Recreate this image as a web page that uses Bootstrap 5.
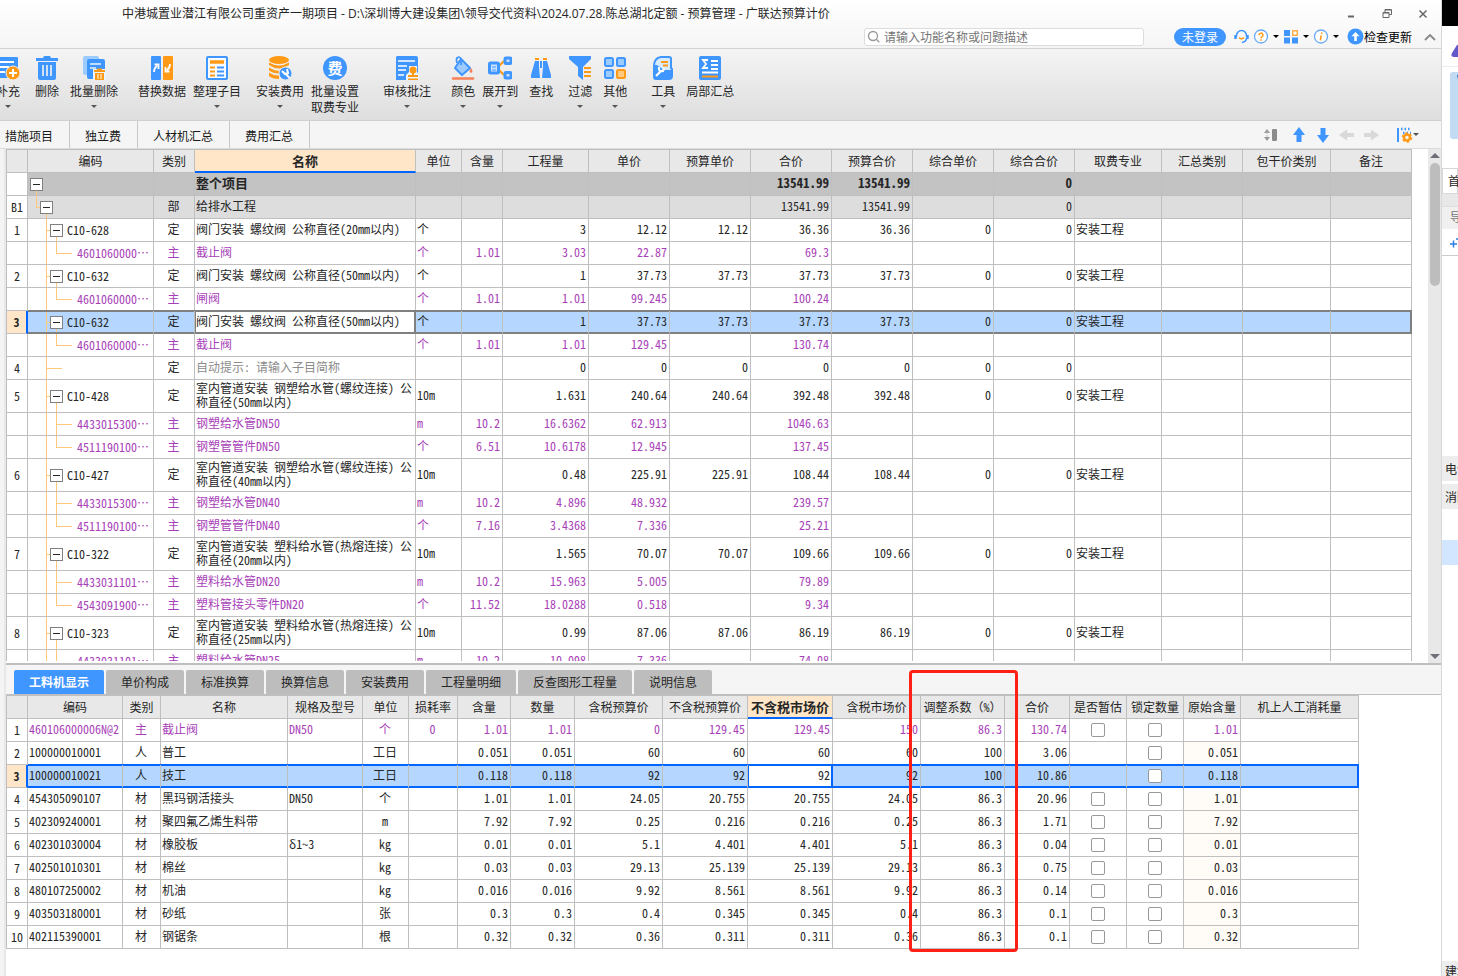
<!DOCTYPE html>
<html lang="zh-CN">
<head>
<meta charset="utf-8">
<meta name="viewport" content="width=device-width, initial-scale=1">
<title>广联达预算计价</title>
<link href="https://cdn.jsdelivr.net/npm/bootstrap@5.3.0/dist/css/bootstrap.min.css" rel="stylesheet">
<style>
:root{--line:#bfbfbf;--ink:#262626;--blue:#4096ff;--sel:#b4d6ff;--orange:#ff9a17;--tree:#ffc97a}
body{font:12px/16px "Noto Sans CJK SC",sans-serif;color:var(--ink);background:#fff}
button{font:inherit;color:inherit;background:none;border:0;padding:0}
svg{display:block;flex:none}
.app-main{min-width:0}
.title-bar{background:linear-gradient(#fff,#f5f5f5);border-bottom:1px solid #d2d2d2}
.title-row{height:27px;padding-left:122px}
.title-text{font-family:"Open Sans","Noto Sans CJK SC",sans-serif}
.win-btns{gap:24px;padding-right:12px}
.tool-row{height:21px;padding-right:4px;padding-bottom:2px}
.search-box{width:280px;height:18px;border:1px solid #dcdcdc;border-radius:3px;background:#fff;padding:0 2px;gap:4px;margin-right:30px}
.search-box input{border:0;outline:0;padding:0;font:inherit;width:240px;height:16px}
.search-box input::placeholder{color:#757575}
.login-btn{width:52px;height:18px;line-height:17px;border-radius:9px;background:var(--blue);color:#fff}
.caret{width:0;height:0;border:3px solid transparent;border-top-color:#555;border-bottom:0}
.tool-row .caret{border-top-color:#000}
.ribbon{height:73px;background:linear-gradient(#f4f4f4,#dedede);border-bottom:1px solid #cfcfcf;padding-top:7px;overflow:hidden}
.ribbon button{display:flex;flex-direction:column;align-items:center;white-space:nowrap;line-height:16px}
.ribbon svg{width:24px;height:24px;margin-bottom:3px}
.ribbon .caret{margin-top:6px}
.r-cut{margin-left:-4px}.r-s{margin-left:7px}.r-m{margin-left:11px}.r-l{margin-left:15px}.r-xl{margin-left:20px}.r-xxl{margin-left:24px}
.page-tabs{height:28px;background:#f5f5f5;border-bottom:1px solid #dcdcdc;padding-right:22px}
.page-tabs a{color:#1a1a1a;text-decoration:none;padding:1px 16px 0 15px;border-right:1px solid #c8c8c8;height:27px;line-height:27px}
.page-tabs a:first-child{padding-left:5px}
.left-edge{width:6px;background:#f4f4f4;border-right:2px solid #e8e8e8}
.grid-wrap{overflow:hidden;margin-bottom:2px}
.grid{border-collapse:separate;border-spacing:0;table-layout:fixed;width:1px;border-top:1px solid var(--line);border-left:1px solid var(--line);font-family:"Noto Sans Mono CJK SC","Noto Sans CJK SC",monospace;line-height:14px}
.grid th,.grid td{border:0 solid var(--line);border-width:0 1px 1px 0;padding:0 2px 2px 1px;height:23px;white-space:nowrap;overflow:hidden;vertical-align:middle}
.grid th{font-weight:400;text-align:center;background:#e8e8e8;padding:0}
.grid th.hot{font-weight:700;font-size:13px;background:#ffe6c8;border-bottom:2px solid #0066ff}
.grid td.c,.grid td.no{text-align:center}
.grid td.no{padding:0}
.grid td.r{text-align:right}
.grid td.wrap{white-space:normal;padding-right:0}
.grid tr.tall td{height:33px}
.grid tr.mat td:not(.no){color:#a83fb8}
.grid tr.root td:not(.no){background-color:#c3c3c3;font-weight:700;font-size:13px}
.grid tr.part td:not(.no){background-color:#ddd}
.grid tr.sel td{background-color:var(--sel);border-bottom-color:var(--edge);box-shadow:inset 0 1px var(--edge),inset 0 -1px var(--edge),0 -1px var(--edge)}
.grid tr.sel td.no{background-color:#ffe6c8;font-weight:700;box-shadow:none;border-bottom-color:var(--line);border-right:2px solid #0066ff}
.grid tr.sel td:last-child{border-right:2px solid var(--edge)}
.grid tr.sel td.cur{background-color:#fff;border-left:1px solid var(--edge);border-right:2px solid var(--edge);padding-left:0}
.grid tr.sel td.cur.r{padding-right:1px}
.grid-a{--edge:#808080}
.grid-b{--edge:#0066ff}
.grid td.hint{color:#8c8c8c}
.grid td.cream{background:#fffcf7}
.grid td.tree{background-repeat:no-repeat;padding:0}
.tree>span{display:flex;align-items:center;gap:4px}
.fold{width:13px;height:13px;border:1px solid #808080;background:#fff;flex:none;display:flex;align-items:center;justify-content:center}
.fold::before{content:"";width:7px;height:1px;background:#262626}
.l0>span{padding-left:2px}.l1>span{padding-left:12px}.l2>span{padding-left:22px}.l3>span{padding-left:49px}
.grid .l0{background-image:linear-gradient(var(--tree),var(--tree));background-size:1px 50%;background-position:8px 100%}
.grid .l1{background-image:linear-gradient(var(--tree),var(--tree)),linear-gradient(var(--tree),var(--tree)),linear-gradient(var(--tree),var(--tree));background-size:1px 50%,4px 1px,1px 50%;background-position:8px 0,8px 50%,18px 100%}
.grid .l2{background-image:linear-gradient(var(--tree),var(--tree)),linear-gradient(var(--tree),var(--tree)),linear-gradient(var(--tree),var(--tree));background-size:1px 100%,4px 1px,1px 50%;background-position:18px 0,18px 50%,28px 100%}
.grid .l2.leaf{background-size:1px 100%,16px 1px,0 0}
.grid .l3{background-image:linear-gradient(var(--tree),var(--tree)),linear-gradient(var(--tree),var(--tree)),linear-gradient(var(--tree),var(--tree));background-size:1px 100%,16px 1px,1px 50%;background-position:18px 0,28px 50%,28px 0}
.grid .l3.more{background-size:1px 100%,16px 1px,1px 100%}
.scroll-rail{width:13px;background:#e8e8e8;padding:4px 2px}
.scroll-thumb{height:123px;border-radius:5px;background:#bdbdbd;margin:5px -1px 0 0}
.tri-up,.tri-down{width:0;height:0;border:5px solid transparent;border-top-width:0;border-bottom-color:#6e6e78}
.tri-down{border-top:5px solid #6e6e78;border-bottom:0}
.detail{border-top:2px solid var(--line);padding-bottom:27px}
.detail-tabs{background:#f5f5f5;padding:5px 8px 0;gap:2px;border-bottom:1px solid var(--line)}
.detail-tabs button{height:24px;padding:0 15px;background:#bdbdbd;border-radius:2px 2px 0 0;line-height:24px}
.detail-tabs .on{background:var(--blue);color:#fff;font-weight:700}
.tick-box{appearance:none;width:14px;height:14px;border:1px solid #999;border-radius:2px;background:#fff;display:block;margin:1px auto 0}
.red-frame{position:absolute;left:903px;top:5px;width:109px;height:282px;border:3px solid #ff1f14;border-radius:4px;pointer-events:none}
.side-app{width:17px;border-left:1px solid #d8d8d8;overflow:hidden;white-space:nowrap;flex:none}
.side-black{height:26px;background:#000}
.side-logo{height:41px;padding:18px 0 0 9px;border-bottom:1px solid #eee}
.side-tile{height:67px;margin:5px 0 29px 8px;background:#c3daf3;border-radius:3px 0 0 3px;padding:3px 0 0 7px}
.side-tab{height:26px;border:1px solid #d8d8d8;padding:4px 0 0 5px;background:#fff}
.side-bar{height:12px;background:#e8e8e8}
.side-sub{height:23px;background:#f0f0f0;color:#777;padding:2px 0 0 8px;border-top:1px solid #ddd}
.side-add{height:27px;border-bottom:1px solid #ccc;padding:8px 0 0 7px;margin-bottom:200px}
.side-cell{height:25px;background:#ededed;padding:5px 0 0 3px;margin-bottom:3px}
.side-pick{height:25px;background:#d3e6ff;margin-top:28px}
.side-foot{height:15px;background:#ededed;padding:2px 0 0 3px;overflow:hidden}
</style>
</head>
<body>
<div class="d-flex vh-100 overflow-hidden">
<div class="app-main d-flex flex-column flex-grow-1">

<header class="title-bar">
  <div class="title-row d-flex align-items-center">
    <span class="title-text flex-grow-1 text-nowrap">中港城置业潜江有限公司重资产一期项目 - D:\深圳博大建设集团\领导交代资料\2024.07.28.陈总湖北定额 - 预算管理 - 广联达预算计价</span>
    <div class="win-btns d-flex align-items-center">
      <button aria-label="最小化"><svg width="12" height="12"><path d="M3 8.500h6" stroke="#666" stroke-width="2"/></svg></button>
      <button aria-label="还原"><svg width="12" height="12" fill="none" stroke="#666"><path d="M4 4V1.500h6.500v5H8M2 4.500h6v5H2zM2 5h6M4 2h6"/></svg></button>
      <button aria-label="关闭"><svg width="12" height="12"><path d="M2.500 2.500l7 7m0-7l-7 7" stroke="#666" stroke-width="1.500"/></svg></button>
    </div>
  </div>
  <div class="tool-row d-flex align-items-center justify-content-end">
    <label class="search-box d-flex align-items-center"><svg width="13" height="13" fill="none" stroke="#999" stroke-width="1.300"><circle cx="6" cy="6" r="4.500"/><path d="M9.300 9.300l3 3"/></svg><input type="text" aria-label="搜索" placeholder="请输入功能名称或问题描述"></label>
    <button class="login-btn">未登录</button>
    <button class="ms-2" aria-label="客服"><svg width="15" height="15" fill="none" stroke="#4096ff" stroke-width="1.500"><path d="M2.500 8V6.500a5 5 0 0 1 10 0V8M12.500 9c0 3-2 4-4.500 4.500"/><path d="M1.500 6v4M13.500 6v4" stroke-width="2.500"/><path d="M5 8.500q2.500 2.500 5 0" stroke="#ff9a17"/></svg></button>
    <button class="d-flex align-items-center ms-1 gap-1" aria-label="帮助"><svg width="16" height="15"><circle cx="8" cy="7.500" r="6.500" fill="#fff" stroke="#69a9f5" stroke-width="1.300"/><path d="M6 6.200a2 2 0 1 1 3 1.600q-1 .5-1 1.400M8 10.200v1.500" fill="none" stroke="#ff9a17" stroke-width="1.500"/></svg><i class="caret"></i></button>
    <button class="d-flex align-items-center ms-1 gap-1" aria-label="应用"><svg width="16" height="15"><path d="M1 1h6v6H1zM1 8.500h6v6H1zM9 8.500h6v6H9z" fill="#4096ff"/><path d="M9.700 1.700h4.600v4.600H9.700z" fill="#fff" stroke="#ffae45" stroke-width="1.400"/></svg><i class="caret"></i></button>
    <button class="d-flex align-items-center ms-1 gap-1" aria-label="信息"><svg width="16" height="15"><circle cx="8" cy="7.500" r="6.500" fill="#fff" stroke="#69a9f5" stroke-width="1.300"/><path d="M8.800 3.500l-.3 1.500M8.200 6.300l-.8 5" stroke="#ff9a17" stroke-width="1.600"/></svg><i class="caret"></i></button>
    <button class="d-flex align-items-center ms-2 text-black"><svg width="17" height="17"><circle cx="8.500" cy="8.500" r="8" fill="#4096ff"/><path d="M8.500 4l4 4.200h-2.700V13H7.200V8.200H4.500z" fill="#fff"/></svg>检查更新</button>
    <button class="r-m" aria-label="收起"><svg width="14" height="12"><path d="M2 9l5-5 5 5" fill="none" stroke="#888" stroke-width="1.800"/></svg></button>
  </div>
</header>

<nav class="ribbon d-flex align-items-start" aria-label="工具栏">
  <button class="r-cut"><svg viewBox="0 0 24 24"><path d="M1 1h20a1 1 0 0 1 1 1v20H1z" fill="#4096ff"/><path d="M2 6h16M2 11h11M2 16h7" stroke="#fff" stroke-width="2"/><circle cx="17" cy="17" r="7" fill="#ff9a17" stroke="#eee"/><path d="M17 13v8M13 17h8" stroke="#fff" stroke-width="2"/></svg>补充<i class="caret"></i></button>
  <button class="r-l"><svg viewBox="0 0 24 24" fill="#4096ff"><path d="M1 2h7l1-2h6l1 2h7v3H1zM3 6h18v16a2 2 0 0 1-2 2H5a2 2 0 0 1-2-2z"/><path d="M8 9v11M12 9v11M16 9v11" stroke="#f4f4f4" stroke-width="1.600"/></svg>删除</button>
  <button class="r-m"><svg viewBox="0 0 24 24"><rect x="1" y="0" width="16" height="19" rx="2" fill="#9ccbff"/><path d="M5 5a2 2 0 0 1 2-2h14a2 2 0 0 1 2 2v18H7a2 2 0 0 1-2-2z" fill="#4096ff"/><path d="M8 8h11M8 12h6" stroke="#e9f4ff" stroke-width="1.500"/><path d="M11 13h13v11H11z" fill="#e9f4ff"/><path d="M12 14h3v-1.500h5V14h3v2H12zM13 17h9v7h-9z" fill="#ff9a17"/><path d="M16 18v5M19 18v5" stroke="#fff"/></svg>批量删除<i class="caret"></i></button>
  <button class="r-xl"><svg viewBox="0 0 24 24"><rect x="1" y="0" width="10" height="24" rx="1" fill="#4096ff"/><rect x="13" y="0" width="10" height="24" rx="1" fill="#ff9a17"/><path d="M4 16q0-4 3-6M4.500 8.500h4V13" fill="none" stroke="#fff" stroke-width="1.800"/><path d="M20 8q0 4-3 6M15.500 11v4.500h4" fill="none" stroke="#fff" stroke-width="1.800"/></svg>替换数据</button>
  <button class="r-s"><svg viewBox="0 0 24 24"><rect x="2" y="1" width="20" height="22" rx="1" fill="#f8fbff" stroke="#4096ff" stroke-width="2"/><path d="M5 6h14" stroke="#ff9a17" stroke-width="3.500"/><path d="M5 11.500h5M5 15.500h5M5 19.500h5" stroke="#ff9a17" stroke-width="2"/><path d="M12 11.500h7M12 15.500h7M12 19.500h7" stroke="#4096ff" stroke-width="2"/></svg>整理子目<i class="caret"></i></button>
  <button class="r-l"><svg viewBox="0 0 24 24"><g fill="#ff9a17"><ellipse cx="11" cy="4" rx="10" ry="4"/><path d="M1 6.500q10 6 20 0V9q-10 7-20 0zM1 11.500q10 6 17 2l-7 4q-6 0-10-3zM1 16.500q5 3.500 10 3v3.500q-7 0-10-3z"/></g><circle cx="17.500" cy="17.500" r="6.500" fill="#4096ff" stroke="#eaeaea"/><path d="M14 15l3 3 3-1-1-4M18 18l3.500 4" fill="none" stroke="#fff" stroke-width="2"/></svg>安装费用<i class="caret"></i></button>
  <button class="r-s"><svg viewBox="0 0 24 24"><circle cx="12" cy="12" r="12" fill="#4096ff"/><text x="12" y="17.500" text-anchor="middle" font-size="15" font-weight="700" fill="#fff">费</text></svg>批量设置<span>取费专业</span></button>
  <button class="r-xxl"><svg viewBox="0 0 24 24"><path d="M2 0h19a2 2 0 0 1 2 2v22H1V1z" fill="#4096ff"/><path d="M3 5h17M3 10h9M3 14h8M3 19h6" stroke="#fff" stroke-width="1.600"/><path d="M11 24v-5l3-3v-6h8v6l2 3v5z" fill="#edf4fc"/><circle cx="18" cy="14" r="3.500" fill="#ff9a17"/><path d="M17 16h2v3h4v2H13v-2h4zM13 22.500h10V24H13z" fill="#ff9a17"/></svg>审核批注<i class="caret"></i></button>
  <button class="r-xl"><svg viewBox="0 0 24 24"><path d="M10 3l9 9-8 7-7-7z" fill="#9ccbff" stroke="#4096ff" stroke-width="2" stroke-linejoin="round"/><path d="M10 9V3q-1-3-4-1-1 1 0 5" fill="none" stroke="#4096ff" stroke-width="1.800"/><path d="M20 12q3 4 0 5-3-1 0-5z" fill="#f98159"/><path d="M2 22.500h20" stroke="#f98159" stroke-width="2.500" stroke-linecap="round"/></svg>颜色<i class="caret"></i></button>
  <button class="r-s"><svg viewBox="0 0 24 24"><path d="M11 10l5-5M11 14l5 5" stroke="#ff9a17" stroke-width="2"/><g fill="#c9e2ff" stroke="#4096ff" stroke-width="3"><rect x="1.500" y="7" width="9" height="10" rx="1"/><rect x="17" y="2" width="6" height="5.500" rx="1"/><rect x="17" y="16.500" width="6" height="5.500" rx="1"/></g><path d="M4 11h4M4 14h4" stroke="#4096ff"/></svg>展开到<i class="caret"></i></button>
  <button class="r-m"><svg viewBox="0 0 24 24"><path d="M6 2h4v2H6zM14 2h4v2h-4z" fill="#ff9a17"/><path d="M6 5h4v6l1 11H2v-3zM14 5h4l4 14v3h-9l1-11zM11 5h2v7h-2z" fill="#4096ff"/></svg>查找</button>
  <button class="r-l"><svg viewBox="0 0 24 24"><path d="M1 0h22v3l-8 8v13l-5-4v-9L1 3z" fill="#4096ff"/><path d="M16 12h7M16 16h7M16 20h7" stroke="#ff9a17" stroke-width="2"/></svg>过滤<i class="caret"></i></button>
  <button class="r-m"><svg viewBox="0 0 24 24" fill="#9ccbff" stroke="#4096ff" stroke-width="2"><rect x="2" y="2" width="8" height="8" rx="1.500"/><rect x="14" y="2" width="8" height="8" rx="1.500"/><rect x="2" y="14" width="8" height="8" rx="1.500"/><rect x="14" y="14" width="8" height="8" rx="1.500" fill="#ffc980" stroke="#ff9a17"/></svg>其他<i class="caret"></i></button>
  <button class="r-xxl"><svg viewBox="0 0 24 24"><path d="M3 10q0-8 7-9h8a2 2 0 0 1 2 2v9l1 1v7a3 3 0 0 1-3 3H5a2 2 0 0 1-2-2z" fill="#d8eaff" stroke="#4096ff" stroke-width="2"/><path d="M3 9h3l7 5h8v8H4z" fill="#4096ff"/><path d="M10 6h7M12 9.500h5" stroke="#ff9a17" stroke-width="2"/><path d="M5 20l5-5M8 11q-1 5 4 4l1-3" fill="none" stroke="#fff" stroke-width="2.200"/></svg>工具<i class="caret"></i></button>
  <button class="r-m"><svg viewBox="0 0 24 24"><rect x="1" y="0" width="22" height="24" rx="2" fill="#4096ff"/><path d="M10 4H5l3 4-3 4h5M13 5h7M13 9h7M13 13h7M4 16.500h16" fill="none" stroke="#fff" stroke-width="1.800"/><path d="M4 20.500h16" stroke="#ff9a17" stroke-width="2"/></svg>局部汇总</button>
</nav>

<nav class="page-tabs d-flex align-items-center" aria-label="页签">
  <a href="#">措施项目</a><a href="#">独立费</a><a href="#">人材机汇总</a><a href="#">费用汇总</a>
  <div class="ms-auto d-flex align-items-center">
    <button aria-label="行高"><svg width="16" height="16"><path d="M1 6l3-4 3 4zM1 10l3 4 3-4z" fill="#999"/><path d="M4 5v6" stroke="#bbb" stroke-dasharray="2 1"/><rect x="9" y="2" width="5" height="12" rx="1" fill="#8c8c8c"/></svg></button>
    <button class="ms-2 ps-1" aria-label="上移"><svg width="16" height="16"><path d="M8 0l6 8h-3.500v7h-5V8H2z" fill="#4096ff"/></svg></button>
    <button class="ms-2" aria-label="下移"><svg width="16" height="16"><path d="M8 16l6-8h-3.500V1h-5v7H2z" fill="#4096ff"/></svg></button>
    <button class="ms-2" aria-label="后退"><svg width="16" height="16"><path d="M0 8l8-5.500V6h7v4H8v3.500z" fill="#d9d9d9"/></svg></button>
    <button class="ms-2" aria-label="前进"><svg width="16" height="16"><path d="M16 8L8 2.500V6H1v4h7v3.500z" fill="#d9d9d9"/></svg></button>
    <button class="ms-3 d-flex align-items-center" aria-label="列设置"><svg width="18" height="16"><path d="M3 1v14" stroke="#4096ff" stroke-width="2"/><path d="M6 2h9M8 6h8" stroke="#4096ff" stroke-width="2.500" stroke-dasharray="1.500 2"/><circle cx="12" cy="10.500" r="3" fill="none" stroke="#ff9a17" stroke-width="2.500"/><circle cx="12" cy="10.500" r="4.500" fill="none" stroke="#ff9a17" stroke-width="1.500" stroke-dasharray="2.400 2.300"/></svg><i class="caret"></i></button>
  </div>
</nav>

<div class="d-flex flex-grow-1 overflow-hidden">
<div class="left-edge flex-shrink-0"></div>
<main class="d-flex flex-column flex-grow-1 overflow-hidden">
  <section class="d-flex flex-grow-1 overflow-hidden">
    <div class="grid-wrap flex-grow-1">
      <table class="grid grid-a">
        <colgroup id="colsA"></colgroup>
        <thead><tr><th></th><th>编码</th><th>类别</th><th class="hot">名称</th><th>单位</th><th>含量</th><th>工程量</th><th>单价</th><th>预算单价</th><th>合价</th><th>预算合价</th><th>综合单价</th><th>综合合价</th><th>取费专业</th><th>汇总类别</th><th>包干价类别</th><th>备注</th></tr></thead>
        <tbody id="bodyA"></tbody>
      </table>
    </div>
    <div class="scroll-rail d-flex flex-column flex-shrink-0"><i class="tri-up"></i><div class="scroll-thumb"></div><i class="tri-down mt-auto"></i></div>
  </section>

  <section class="detail position-relative flex-shrink-0">
    <div class="detail-tabs d-flex">
      <button class="on">工料机显示</button><button>单价构成</button><button>标准换算</button><button>换算信息</button><button>安装费用</button><button>工程量明细</button><button>反查图形工程量</button><button>说明信息</button>
    </div>
    <table class="grid grid-b">
      <colgroup id="colsB"></colgroup>
      <thead><tr><th></th><th>编码</th><th>类别</th><th>名称</th><th>规格及型号</th><th>单位</th><th>损耗率</th><th>含量</th><th>数量</th><th>含税预算价</th><th>不含税预算价</th><th class="hot">不含税市场价</th><th>含税市场价</th><th>调整系数（%）</th><th>合价</th><th>是否暂估</th><th>锁定数量</th><th>原始含量</th><th>机上人工消耗量</th></tr></thead>
      <tbody id="bodyB"></tbody>
    </table>
    <div class="red-frame"></div>
  </section>
</main>
</div>
</div>

<aside class="side-app d-flex flex-column">
  <div class="side-black"></div>
  <div class="side-logo"><svg width="12" height="14"><path d="M1 9L6 1h6v12H4Q-1 13 1 9z" fill="#6158c9"/></svg></div>
  <div class="side-tile"><svg width="4" height="20"><path d="M0 0h4v18z" fill="#1d62b8"/></svg></div>
  <div class="side-tab">首页</div>
  <div class="side-bar"></div>
  <div class="side-sub">导航</div>
  <div class="side-add"><svg width="12" height="12"><path d="M1 7h7M4.500 3.500v7M7 2h5" stroke="#2f7de0" stroke-width="1.500"/></svg></div>
  <div class="side-cell">电气</div>
  <div class="side-cell">消防</div>
  <div class="side-pick"></div>
  <div class="side-foot mt-auto">建筑</div>
</aside>
</div>

<script src="https://cdn.jsdelivr.net/npm/bootstrap@5.3.0/dist/js/bootstrap.bundle.min.js"></script>
<script>
const widthsA = [21,126,41,221,46,41,86,81,81,81,81,81,81,87,81,88,81];
const widthsB = [21,95,38,127,75,46,49,53,64,88,85,85,88,84,65,57,57,57,118];

// row class | tree class | no | code | kind | name | unit | content | qty | price | budget price | total | budget total | comp. price | comp. total | trade
const rowsA = `
root|l0||||整个项目||||||13541.99|13541.99||0|
part|l1|B1||部|给排水工程||||||13541.99|13541.99||0|
|l2|1|C10-628|定|阀门安装 螺纹阀 公称直径(20mm以内)|个||3|12.12|12.12|36.36|36.36|0|0|安装工程
mat|l3||4601060000…|主|截止阀|个|1.01|3.03|22.87||69.3||||
|l2|2|C10-632|定|阀门安装 螺纹阀 公称直径(50mm以内)|个||1|37.73|37.73|37.73|37.73|0|0|安装工程
mat|l3||4601060000…|主|闸阀|个|1.01|1.01|99.245||100.24||||
sel|l2|3|C10-632|定|阀门安装 螺纹阀 公称直径(50mm以内)|个||1|37.73|37.73|37.73|37.73|0|0|安装工程
mat|l3||4601060000…|主|截止阀|个|1.01|1.01|129.45||130.74||||
|l2 leaf|4||定|自动提示: 请输入子目简称|||0|0|0|0|0|0|0|
tall|l2|5|C10-428|定|室内管道安装 钢塑给水管(螺纹连接) 公称直径(50mm以内)|10m||1.631|240.64|240.64|392.48|392.48|0|0|安装工程
mat|l3 more||4433015300…|主|钢塑给水管DN50|m|10.2|16.6362|62.913||1046.63||||
mat|l3||4511190100…|主|钢塑管管件DN50|个|6.51|10.6178|12.945||137.45||||
tall|l2|6|C10-427|定|室内管道安装 钢塑给水管(螺纹连接) 公称直径(40mm以内)|10m||0.48|225.91|225.91|108.44|108.44|0|0|安装工程
mat|l3 more||4433015300…|主|钢塑给水管DN40|m|10.2|4.896|48.932||239.57||||
mat|l3||4511190100…|主|钢塑管管件DN40|个|7.16|3.4368|7.336||25.21||||
tall|l2|7|C10-322|定|室内管道安装 塑料给水管(热熔连接) 公称直径(20mm以内)|10m||1.565|70.07|70.07|109.66|109.66|0|0|安装工程
mat|l3 more||4433031101…|主|塑料给水管DN20|m|10.2|15.963|5.005||79.89||||
mat|l3||4543091900…|主|塑料管接头零件DN20|个|11.52|18.0288|0.518||9.34||||
tall|l2|8|C10-323|定|室内管道安装 塑料给水管(热熔连接) 公称直径(25mm以内)|10m||0.99|87.06|87.06|86.19|86.19|0|0|安装工程
mat|l3||4433031101…|主|塑料给水管DN25|m|10.2|10.098|7.336||74.08||||`.trim().split('\n');

// code | kind | name | spec | unit | loss | content | qty | 4 prices | factor | total | provisional box | original content
const rowsB = `
460106000006N@2|主|截止阀|DN50|个|0|1.01|1.01|0|129.45|129.45|150|86.3|130.74|1|1.01
100000010001|人|普工||工日||0.051|0.051|60|60|60|60|100|3.06|0|0.051
100000010021|人|技工||工日||0.118|0.118|92|92|92|92|100|10.86|0|0.118
454305090107|材|黑玛钢活接头|DN50|个||1.01|1.01|24.05|20.755|20.755|24.05|86.3|20.96|1|1.01
402309240001|材|聚四氟乙烯生料带||m||7.92|7.92|0.25|0.216|0.216|0.25|86.3|1.71|1|7.92
402301030004|材|橡胶板|δ1~3|kg||0.01|0.01|5.1|4.401|4.401|5.1|86.3|0.04|1|0.01
402501010301|材|棉丝||kg||0.03|0.03|29.13|25.139|25.139|29.13|86.3|0.75|1|0.03
480107250002|材|机油||kg||0.016|0.016|9.92|8.561|8.561|9.92|86.3|0.14|1|0.016
403503180001|材|砂纸||张||0.3|0.3|0.4|0.345|0.345|0.4|86.3|0.1|1|0.3
402115390001|材|钢锯条||根||0.32|0.32|0.36|0.311|0.311|0.36|86.3|0.1|1|0.32`.trim().split('\n');

const td = (cls, text) => `<td class="${cls}">${text}</td>`;
const cols = (id, list) => document.getElementById(id).innerHTML = list.map(w => `<col style="width:${w}px">`).join('');
cols('colsA', widthsA);
cols('colsB', widthsB);
for (const [cls, w] of [['.grid-a', widthsA], ['.grid-b', widthsB]])
  document.querySelector(cls).style.width = w.reduce((a, b) => a + b, 1) + 'px';

document.getElementById('bodyA').innerHTML = rowsA.map(line => {
  const [cls, tree, no, code, kind, name, unit, ...rest] = line.split('|');
  const trade = rest.pop();
  const fold = tree.includes('l3') || tree.includes('leaf') ? '' : '<button class="fold" aria-label="折叠"></button>';
  const nameCls = cls === 'sel' ? 'cur' : tree.includes('leaf') ? 'hint' : cls === 'tall' ? 'wrap' : '';
  return `<tr class="${cls}">` + td('no', no) + td('tree ' + tree, `<span>${fold}${code}</span>`) + td('c', kind) +
    td(nameCls, name) + td('', unit) + rest.map(v => td('r', v)).join('') + td('', trade) + '<td></td><td></td><td></td></tr>';
}).join('');

const box = (label, n) => `<input type="checkbox" class="tick-box" aria-label="${label} ${n}">`;
document.getElementById('bodyB').innerHTML = rowsB.map((line, i) => {
  const v = line.split('|');
  const cls = i === 0 ? 'mat' : i === 2 ? 'sel' : '';
  return `<tr class="${cls}">` + td('no', i + 1) + td('', v[0]) + td('c', v[1]) + td('', v[2]) + td('', v[3]) + td('c', v[4]) + td('c', v[5]) +
    v.slice(6, 14).map((x, k) => td(k === 4 && cls === 'sel' ? 'r cur' : 'r', x)).join('') +
    td('c', v[14] === '1' ? box('是否暂估', i + 1) : '') + td('c', box('锁定数量', i + 1)) +
    td(i && cls !== 'sel' ? 'r cream' : 'r', v[15]) + '<td></td></tr>';
}).join('');
</script>
</body>
</html>
